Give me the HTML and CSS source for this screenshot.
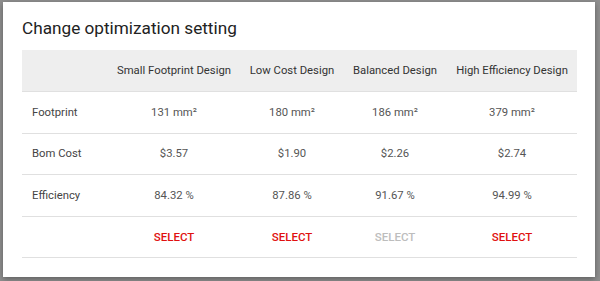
FILE: index.html
```html
<!DOCTYPE html>
<html>
<head>
<meta charset="utf-8">
<link rel="stylesheet" href="styles.css">
</head>
<body>
<div class="backdrop">
  <div class="dialog">
    <h2 class="title">Change optimization setting</h2>
    <table class="grid">
      <colgroup>
        <col class="c0"><col class="c1"><col class="c2"><col class="c3"><col class="c4">
      </colgroup>
      <thead>
        <tr>
          <th></th>
          <th>Small Footprint Design</th>
          <th>Low Cost Design</th>
          <th>Balanced Design</th>
          <th>High Efficiency Design</th>
        </tr>
      </thead>
      <tbody>
        <tr>
          <td class="label">Footprint</td>
          <td>131 mm²</td><td>180 mm²</td><td>186 mm²</td><td>379 mm²</td>
        </tr>
        <tr>
          <td class="label">Bom Cost</td>
          <td>$3.57</td><td>$1.90</td><td>$2.26</td><td>$2.74</td>
        </tr>
        <tr>
          <td class="label">Efficiency</td>
          <td>84.32 %</td><td>87.86 %</td><td>91.67 %</td><td>94.99 %</td>
        </tr>
        <tr>
          <td class="label"></td>
          <td><span class="select">SELECT</span></td>
          <td><span class="select">SELECT</span></td>
          <td><span class="select disabled">SELECT</span></td>
          <td><span class="select">SELECT</span></td>
        </tr>
      </tbody>
    </table>
  </div>
</div>
</body>
</html>
```
FILE: styles.css
```css
html, body {
  margin: 0;
  padding: 0;
}
body {
  width: 600px;
  height: 281px;
  overflow: hidden;
  background: #8f8f8f;
  font-family: Roboto, "Noto Sans", sans-serif;
}
.backdrop {
  padding: 2px 5px 4px 3px;
}
.dialog {
  width: 592px;
  height: 275px;
  box-sizing: border-box;
  background: #fff;
  padding: 14px 18px 0 19px;
  box-shadow: 0 2px 6px rgba(0,0,0,0.35);
}
.title {
  margin: 0 0 10px 0;
  font-size: 17.2px;
  line-height: 24px;
  font-weight: 400;
  color: #222;
}
.grid {
  width: 555px;
  border-collapse: collapse;
  table-layout: fixed;
  font-size: 11.3px;
}
.c0 { width: 85px; }
.c1 { width: 134px; }
.c2 { width: 102px; }
.c3 { width: 104px; }
.c4 { width: 130px; }
.grid th {
  background: #eeeeee;
  height: 41px;
  padding: 0;
  font-weight: 400;
  color: #333;
  text-align: center;
  border-bottom: 1px solid #e0e0e0;
  white-space: nowrap;
}
.grid td {
  height: 40.5px;
  padding: 0;
  text-align: center;
  color: #555;
  border-bottom: 1px solid #e0e0e0;
  white-space: nowrap;
}
.grid td.label {
  text-align: left;
  padding-left: 10px;
  color: #444;
}
.select {
  font-size: 11.5px;
  font-weight: 500;
  color: #e01010;
}
.select.disabled {
  color: #bdbdbd;
}
```
